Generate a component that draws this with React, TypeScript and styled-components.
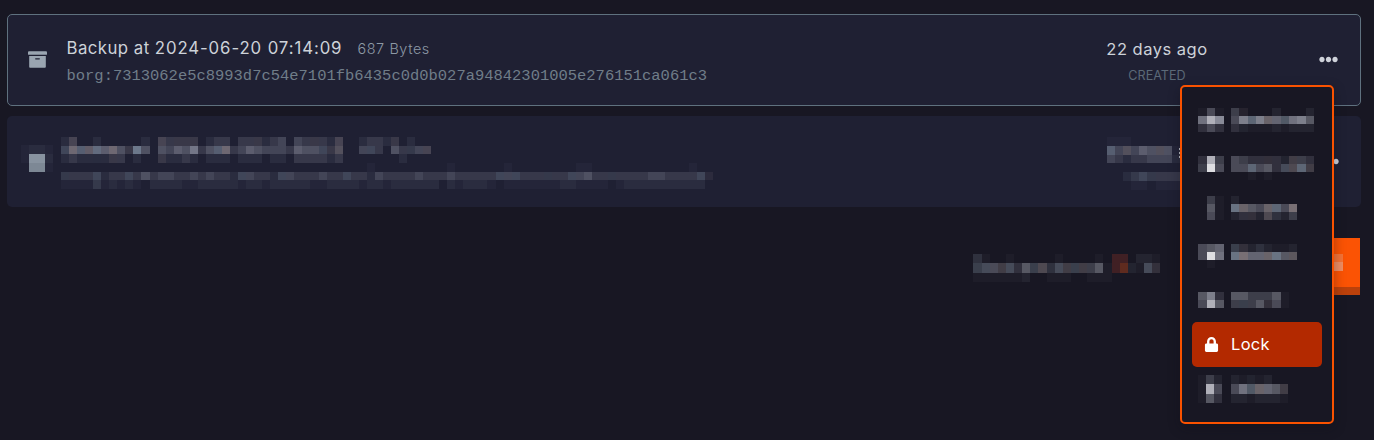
import React from "react";
import styled, { createGlobalStyle, css } from "styled-components";
import { FaArchive, FaEllipsisH, FaLock } from "react-icons/fa";

const GlobalStyle = createGlobalStyle`
  * { box-sizing: border-box; }
  body {
    margin: 0;
    background: #181723;
    font-family: Inter, "Open Sans", sans-serif;
    overflow: hidden;
  }
`;

/* Redacted content: every character of a row is one block.
   Digits are neutral, capitals bluish, small letters warm; higher is brighter. */
const fixedColors: Record<string, string> = {
  ".": "transparent",
  "-": "rgba(205,212,222,0.035)",
  "+": "rgba(215,215,222,0.8)",
  "*": "rgba(235,235,238,0.94)",
  r: "#402024",
  R: "#5f2b1f",
  o: "#fb5304",
  p: "#f47337",
  q: "#ee8d63",
  s: "#bb410b",
  t: "#8893a0",
  u: "#7d8895",
};

const blockColor = (c: string): string => {
  if (fixedColors[c]) return fixedColors[c];
  if (c >= "1" && c <= "9") return `rgba(205,208,222,${Number(c) * 0.07})`;
  if (c >= "A" && c <= "I") return `rgba(190,212,230,${(c.charCodeAt(0) - 64) * 0.07})`;
  return `rgba(220,205,202,${(c.charCodeAt(0) - 96) * 0.07})`;
};

const MosaicGrid = styled.div<{ $cols: number; $w: number; $h: number; $top: number }>`
  display: grid;
  flex: none;
  grid-template-columns: repeat(${(p) => p.$cols}, ${(p) => p.$w}px);
  grid-auto-rows: ${(p) => p.$h}px;
  margin-top: ${(p) => p.$top}px;
`;

const Block = styled.span<{ $c: string }>`
  background: ${(p) => blockColor(p.$c)};
`;

type MosaicProps = { rows: string[]; w?: number; h?: number; top?: number };

const Mosaic = ({ rows, w = 8.06, h = 8.67, top = 0 }: MosaicProps) => {
  const cols = Math.max(...rows.map((r) => r.length));
  return (
    <MosaicGrid $cols={cols} $w={w} $h={h} $top={top} aria-hidden>
      {rows.flatMap((r, y) =>
        r.padEnd(cols, ".").split("").map((c, x) => <Block key={`${y}-${x}`} $c={c} />)
      )}
    </MosaicGrid>
  );
};

const Page = styled.main`
  position: relative;
  width: 1374px;
  height: 440px;
  padding: 14px 13px 0 7px;
  overflow: hidden;
  background: #181723;
`;

const Card = styled.section<{ $active?: boolean }>`
  display: flex;
  height: ${(p) => (p.$active ? 92 : 91)}px;
  margin-bottom: 10px;
  border-radius: 5px;
  background: #1f2033;
  ${(p) =>
    p.$active &&
    css`
      border: 1px solid #5f717f;
    `}
`;

const ArchiveCell = styled.div`
  display: flex;
  align-items: center;
  width: 58.5px;
  padding: 0 0 2px 20px;
  color: #9aa5b1;
`;

const Details = styled.div`
  flex: 1;
  padding-top: 21px;
`;

const TitleLine = styled.div`
  display: flex;
  align-items: center;
  gap: 15px;
  height: 24px;
  white-space: nowrap;
`;

const Title = styled.span`
  font-size: 16.8px;
  letter-spacing: 0.45px;
  color: #cdd2d9;
`;

const Timestamp = styled.span`
  letter-spacing: 0.9px;
`;

const Size = styled.span`
  font-size: 14.4px;
  font-weight: 300;
  letter-spacing: 0.6px;
  color: #8d99a5;
`;

const Checksum = styled.div`
  padding-top: 1px;
  font: 15.48px/30px "Liberation Mono", monospace;
  color: #707d89;
`;

const Created = styled.div`
  display: flex;
  flex-direction: column;
  align-items: center;
  width: 110px;
  padding-top: 22px;
  margin-right: 107px;
  white-space: nowrap;
`;

const Age = styled.span`
  font-size: 16.5px;
  line-height: 24px;
  letter-spacing: 0.5px;
  color: #cdd2d9;
`;

const Caption = styled.span`
  font-size: 12.6px;
  line-height: 30px;
  color: #5b6977;
`;

const MoreButton = styled.button<{ $lift?: number }>`
  display: flex;
  align-items: center;
  width: 41px;
  padding: 0 0 ${(p) => p.$lift ?? 0}px;
  border: 0;
  background: none;
  color: #cfd2da;
`;

const HiddenIcon = styled.div`
  width: 40px;
  margin: 0 0 0 14px;
`;

const HiddenDetails = styled.div`
  flex: 1;
`;

const HiddenAge = styled.div`
  display: flex;
  width: 213px;
`;

const Sliver = styled.i`
  width: 3px;
  height: 10px;
  margin: 32px 0 0 -1px;
  background: repeating-linear-gradient(#b9bec6 0 2px, #30313f 2px 4px);
`;

const Footer = styled.footer`
  display: flex;
  justify-content: flex-end;
  gap: 139.6px;
  padding: 21px 1px 0 0;
`;

const Menu = styled.div`
  position: absolute;
  left: 1180px;
  top: 85px;
  width: 154px;
  height: 339px;
  padding: 10px;
  border: 2px solid #fa5200;
  border-radius: 5px;
  background: #181723;
  box-shadow: 0 4px 12px rgba(15, 14, 24, 0.35);
`;

const MenuItem = styled.div<{ $active?: boolean }>`
  display: flex;
  height: 45px;
  padding-left: 6px;
  border-radius: 5px;
  ${(p) =>
    p.$active &&
    css`
      align-items: center;
      padding: 0 0 1px 12px;
      background: #b32900;
      color: #fff;
    `}
`;

const IconSlot = styled.div<{ $w: number }>`
  display: flex;
  flex: none;
  width: ${(p) => p.$w}px;
`;

const MenuLabel = styled.span`
  font-size: 16.5px;
  letter-spacing: 0.3px;
`;

type Entry = { icon: string[]; label: string[]; top: number; h: number; w: number; iconW?: number };

const before: Entry[] = [
  { top: 11, h: 8, w: 8.3, icon: ["-4-", "7+9", "242"], label: ["3a...1...1", "48F8f6E785", "2A---1-111"] },
  { top: 14, h: 8, w: 8.3, icon: ["2+3", "3*4"], label: ["4322b2Ac32", "44F452DdFc", "..-.-....."] },
  { top: 9, h: 8, w: 8.25, iconW: 8.55, icon: [".3-", ".5-", ".4-"], label: ["1.......", "Gf54fF4g", "12b1dB13"] },
  { top: 12, h: 8, w: 8.25, icon: ["456", "4*7", ".-."], label: ["Cb1B1--1", "Gg66fG5e"] },
  { top: 15, h: 8, w: 8.25, icon: ["582", "4+5"], label: ["553335-", "3C35b4-"] },
];

const after: Entry[] = [
  { top: 8, h: 9.3, w: 8.14, iconW: 8, icon: ["-31", "-+4", "-52"], label: ["1-A-1..", "47Ef65c", "11-111-"] },
];

const HiddenItem = ({ icon, label, top, h, w, iconW = 8.55 }: Entry) => (
  <MenuItem>
    <IconSlot $w={33}>
      <Mosaic rows={icon} top={top} h={h} w={iconW} />
    </IconSlot>
    <Mosaic rows={label} top={top} h={h} w={w} />
  </MenuItem>
);

const hiddenText = [
  "1c..1.....1.c2bbb.122.22b123.32b21c..1221b.1..",
  "CfEeF5f4bG4.4354724Ef23543332544Cbd..3C2.42B3c",
  "1211A1b2.1..b1121.111.111.11.222212.......1....",
  "......................................-.........-......-........--............-.",
  "B222C122C2423322323221C3221C3222322C221322223222322222C3C222B22C3422B2222332222C3B".slice(0, 80) + "a",
  "----B-1-1-.1111--11111-11-11111--1111-11-111111.1-111-.-------11----.-1111111111",
];

const pageButton = ["ooooooo", "ooooooo", "oooopoo", "ooooqoo", "ooooooo", "ooooooo", "sssssss"];

export default function App() {
  return (
    <>
      <GlobalStyle />
      <Page>
        <Card $active>
          <ArchiveCell>
            <FaArchive size={19} />
          </ArchiveCell>
          <Details>
            <TitleLine>
              <Title>
                Backup at <Timestamp>2024-06-20 07:14:09</Timestamp>
              </Title>
              <Size>687 Bytes</Size>
            </TitleLine>
            <Checksum>borg:7313062e5c8993d7c54e7101fb6435c0d0b027a94842301005e276151ca061c3</Checksum>
          </Details>
          <Created>
            <Age>22 days ago</Age>
            <Caption>CREATED</Caption>
          </Created>
          <MoreButton aria-label="More" $lift={2}>
            <FaEllipsisH size={19} />
          </MoreButton>
        </Card>
        <Card>
          <HiddenIcon>
            <Mosaic rows={["-11-", "-tt1", ".uu-"]} top={29} h={9} />
          </HiddenIcon>
          <HiddenDetails>
            <Mosaic rows={hiddenText} top={21} />
          </HiddenDetails>
          <HiddenAge>
            <Mosaic
              rows={["---......", "E3d354d4-", "321223331", ".........", "..ABCB222", "...--.---"]}
              top={21}
              h={8.75}
              w={8.1}
            />
            <Sliver />
          </HiddenAge>
          <MoreButton aria-label="More">
            <FaEllipsisH size={19} />
          </MoreButton>
        </Card>
        <Footer>
          <Mosaic
            rows={["B-..-.....-....-.rr.11-", "CD4cD25CdBDcCc35-rRA-Db", "------1..---..---......"]}
            top={16}
            w={8.13}
            h={9.33}
          />
          <Mosaic rows={pageButton} w={8.6} h={8.14} />
        </Footer>
        <Menu>
          {before.map((e, i) => (
            <HiddenItem key={i} {...e} />
          ))}
          <MenuItem $active>
            <IconSlot $w={27}>
              <FaLock size={15} />
            </IconSlot>
            <MenuLabel>Lock</MenuLabel>
          </MenuItem>
          {after.map((e, i) => (
            <HiddenItem key={i} {...e} />
          ))}
        </Menu>
      </Page>
    </>
  );
}
